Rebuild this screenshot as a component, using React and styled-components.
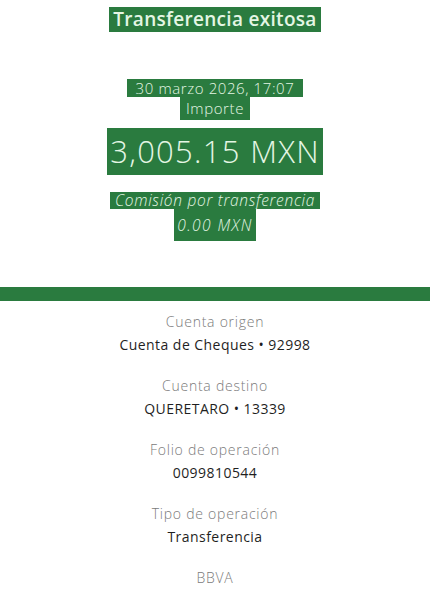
import React from "react";
import styled, { createGlobalStyle } from "styled-components";

const GREEN = "#2a7b3f";
const PALE = "#e4f6e4";

const Global = createGlobalStyle`
  html, body { margin: 0; padding: 0; background: #ffffff; }
  body { font-family: "Open Sans", Lato, sans-serif; }
`;

const Page = styled.div`
  width: 430px;
  min-height: 597px;
  background: #ffffff;
  display: flex;
  flex-direction: column;
`;

const Header = styled.header`
  display: flex;
  flex-direction: column;
  align-items: center;
  padding-top: 7px;
`;

const Mark = styled.span`
  display: inline-block;
  background: ${GREEN};
  color: ${PALE};
  font-family: "Open Sans", Lato, sans-serif;
  font-size: ${(p) => p.$size}px;
  font-weight: ${(p) => p.$weight || 300};
  font-style: ${(p) => (p.$italic ? "italic" : "normal")};
  line-height: ${(p) => p.$lh}px;
  padding: 0 ${(p) => p.$px || 4}px;
  margin-top: ${(p) => p.$mt || 0}px;
  letter-spacing: ${(p) => p.$ls || 0}px;
  white-space: nowrap;
`;

const Bar = styled.div`
  height: 14px;
  background: ${GREEN};
  margin-top: ${(p) => p.$mt}px;
`;

const Details = styled.section`
  display: flex;
  flex-direction: column;
  align-items: center;
  padding-top: 11px;
  gap: 21px;
`;

const Field = styled.div`
  display: flex;
  flex-direction: column;
  align-items: center;
  gap: 3px;
`;

const Label = styled.div`
  font-size: 14px;
  font-weight: 300;
  color: #7a7a7a;
  line-height: 20px;
  letter-spacing: 0.75px;
`;

const Value = styled.div`
  font-size: 14px;
  font-weight: 400;
  color: #1f1f1f;
  line-height: 20px;
  letter-spacing: 0.45px;
`;

const fields = [
  ["Cuenta origen", "Cuenta de Cheques • 92998"],
  ["Cuenta destino", "QUERETARO • 13339"],
  ["Folio de operación", "0099810544"],
  ["Tipo de operación", "Transferencia"],
];

export default function App() {
  return (
    <Page>
      <Global />
      <Header>
        <Mark $size={19} $weight={600} $lh={25} $px={4} $ls={0.3}>
          Transferencia exitosa
        </Mark>
        <Mark $size={15} $lh={18} $px={9} $mt={47} $ls={0.6}>
          30 marzo 2026, 17:07
        </Mark>
        <Mark $size={15} $lh={23} $px={6} $ls={0.6}>
          Importe
        </Mark>
        <Mark $size={31} $lh={47} $px={3} $mt={8} $ls={1.3}>
          3,005.15 MXN
        </Mark>
        <Mark $size={15.5} $lh={17} $px={5} $italic $mt={17} $ls={0.7}>
          Comisión por transferencia
        </Mark>
        <Mark $size={15.5} $lh={32} $px={3} $italic $ls={1.4}>
          0.00 MXN
        </Mark>
      </Header>
      <Bar $mt={46} />
      <Details>
        {fields.map(([l, v]) => (
          <Field key={l}>
            <Label>{l}</Label>
            <Value>{v}</Value>
          </Field>
        ))}
        <Label>BBVA</Label>
      </Details>
    </Page>
  );
}
